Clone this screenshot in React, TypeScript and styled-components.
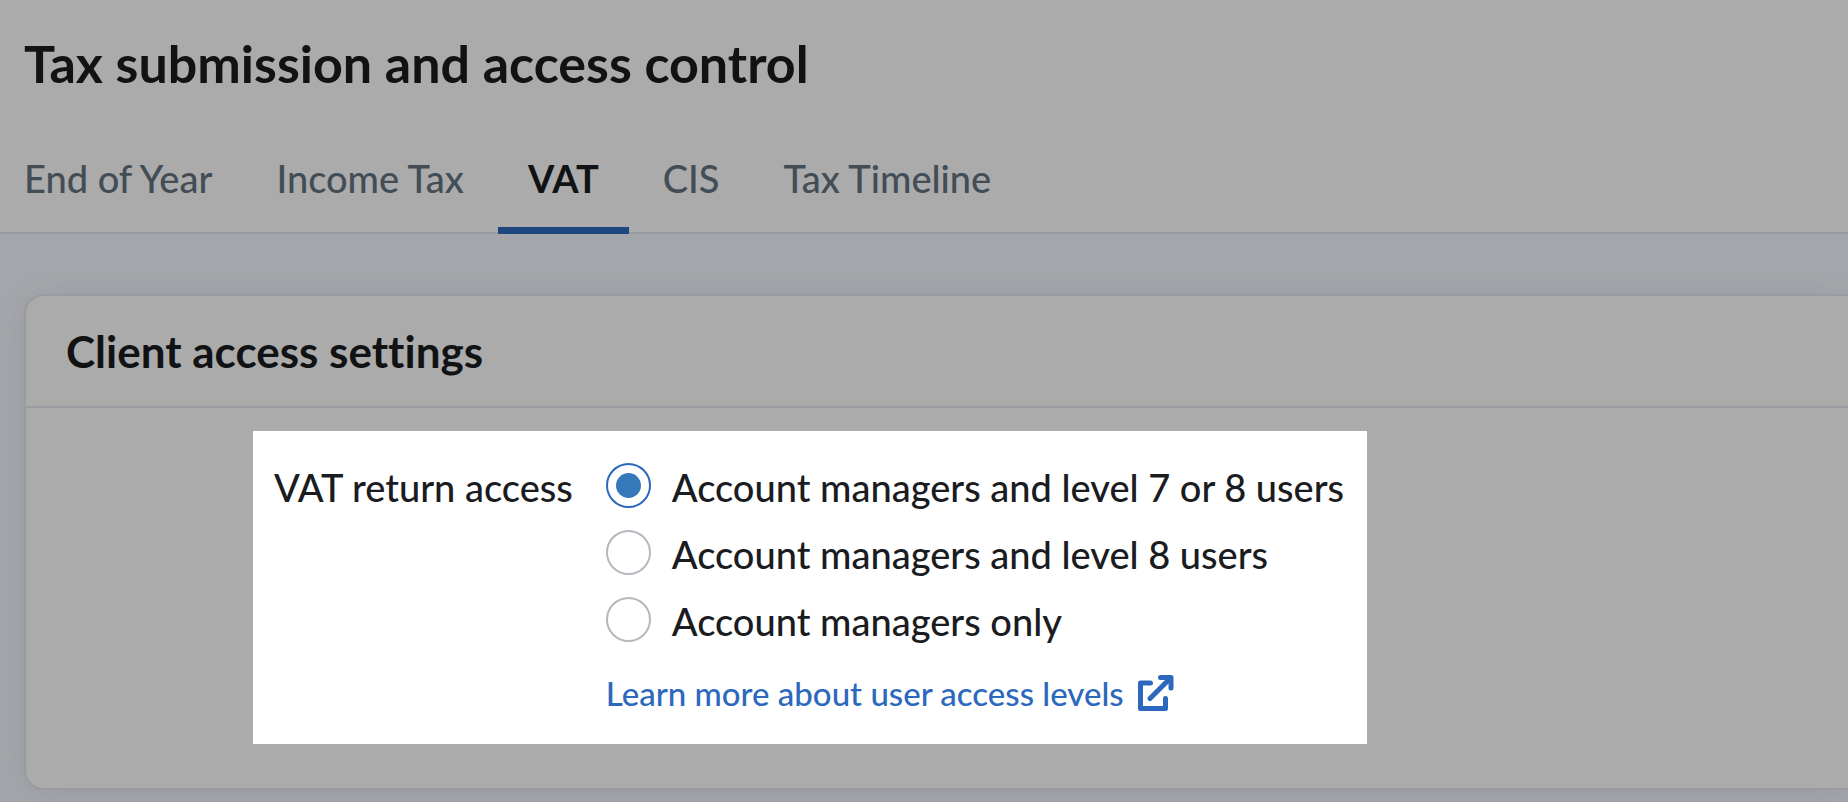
import React, { useState } from 'react';
import styled, { createGlobalStyle } from 'styled-components';

const GlobalStyle = createGlobalStyle`
  *, *::before, *::after { box-sizing: border-box; }
  body {
    margin: 0;
    background: #f6f8ff;
    color: #1a1c1f;
    font-family: Lato, "Liberation Sans", sans-serif;
    font-weight: 500;
    font-size: 38px;
    line-height: 48px;
    font-variant-ligatures: none;
  }
`;

const Page = styled.div`
  position: relative;
  min-height: 100vh;
  overflow: hidden;
`;

const PageHeader = styled.header`
  padding: 31px 0 0 24px;
  background: #fff;
  border-bottom: 2px solid #e6e7ef;
`;

const Title = styled.h1`
  margin: 0;
  font-size: 52px;
  line-height: 64px;
  font-weight: 700;
`;

const Tabs = styled.nav`
  display: flex;
  gap: 64px;
  margin-top: 59px;
`;

const Tab = styled.a<{ $active?: boolean }>`
  position: relative;
  height: 78px;
  color: ${p => (p.$active ? '#1a1c1f' : '#647380')};
  font-weight: ${p => (p.$active ? 700 : 500)};
  text-decoration: none;
  white-space: nowrap;

  &::after {
    content: ${p => (p.$active ? '""' : 'none')};
    position: absolute;
    left: -30px;
    right: -30px;
    bottom: -2px;
    height: 7px;
    background: #2e6abe;
  }
`;

const Card = styled.section`
  margin: 60px 0 12px 24px;
  background: #fff;
  border: 2px solid #e6e7ef;
  border-right: 0;
  border-radius: 20px 0 0 20px;
  box-shadow: 0 4px 32px rgba(60, 110, 130, 0.12);
`;

const CardTitle = styled.h2`
  margin: 0;
  padding: 27px 40px;
  border-bottom: 2px solid #e6e7ef;
  font-size: 44px;
  line-height: 56px;
  font-weight: 700;
`;

const CardBody = styled.div`
  padding: 23px 0 44px 227px;
`;

/* The highlighted part of the page; its spread shadow dims all the rest. */
const Spotlight = styled.fieldset`
  position: relative;
  z-index: 1;
  display: flex;
  gap: 33px;
  width: fit-content;
  margin: 0;
  padding: 32px 23px 29px 21px;
  border: 0;
  background: #fff;
  box-shadow: 0 0 0 4000px rgba(0, 0, 0, 0.33);
`;

const FieldLabel = styled.span`
  white-space: nowrap;
`;

const Options = styled.div`
  display: flex;
  flex-direction: column;
  align-items: flex-start;
  gap: 20px;
`;

const Option = styled.label`
  display: flex;
  gap: 21px;
  white-space: nowrap;
`;

const OptionText = styled.span`
  padding-top: 1px;
  line-height: 46px;
`;

const Radio = styled.input`
  appearance: none;
  flex: none;
  display: grid;
  place-items: center;
  width: 45px;
  height: 45px;
  margin: 0;
  border: 2px solid #b4b9bf;
  border-radius: 50%;
  background: #fff;

  &:checked { border-color: #2c68bd; }
  &:checked::before {
    content: "";
    width: 25px;
    height: 25px;
    border-radius: 50%;
    background: #3579bb;
  }
`;

const HelpLink = styled.a`
  display: flex;
  align-items: center;
  gap: 14px;
  margin-top: 7px;
  color: #2c68bd;
  font-size: 33px;
  line-height: 44px;
  text-decoration: none;
  white-space: nowrap;
`;

const ExternalIcon = () => (
  <svg width="36" height="36" viewBox="0 0 36 36" fill="none" stroke="currentColor" strokeWidth="5" strokeLinejoin="round" strokeLinecap="round" aria-hidden="true">
    <path d="M12.5 8H2.5V33.500H27.500V23.500" />
    <path d="M12 23.500L32 3.500" />
    <path d="M22.500 2.500H33V13" />
  </svg>
);

const tabs = ['End of Year', 'Income Tax', 'VAT', 'CIS', 'Tax Timeline'];
const options = [
  'Account managers and level 7 or 8 users',
  'Account managers and level 8 users',
  'Account managers only',
];

export default function App() {
  const [selected, setSelected] = useState(0);
  return (
    <Page>
      <GlobalStyle />
      <PageHeader>
        <Title>Tax submission and access control</Title>
        <Tabs>
          {tabs.map(name => (
            <Tab key={name} href="#" $active={name === 'VAT'} aria-current={name === 'VAT' ? 'page' : undefined}>
              {name}
            </Tab>
          ))}
        </Tabs>
      </PageHeader>
      <Card>
        <CardTitle>Client access settings</CardTitle>
        <CardBody>
          <Spotlight aria-labelledby="vat-access">
            <FieldLabel id="vat-access">VAT return access</FieldLabel>
            <Options>
              {options.map((text, i) => (
                <Option key={text}>
                  <Radio type="radio" name="vat-access" checked={selected === i} onChange={() => setSelected(i)} />
                  <OptionText>{text}</OptionText>
                </Option>
              ))}
              <HelpLink href="#">
                Learn more about user access levels
                <ExternalIcon />
              </HelpLink>
            </Options>
          </Spotlight>
        </CardBody>
      </Card>
    </Page>
  );
}
